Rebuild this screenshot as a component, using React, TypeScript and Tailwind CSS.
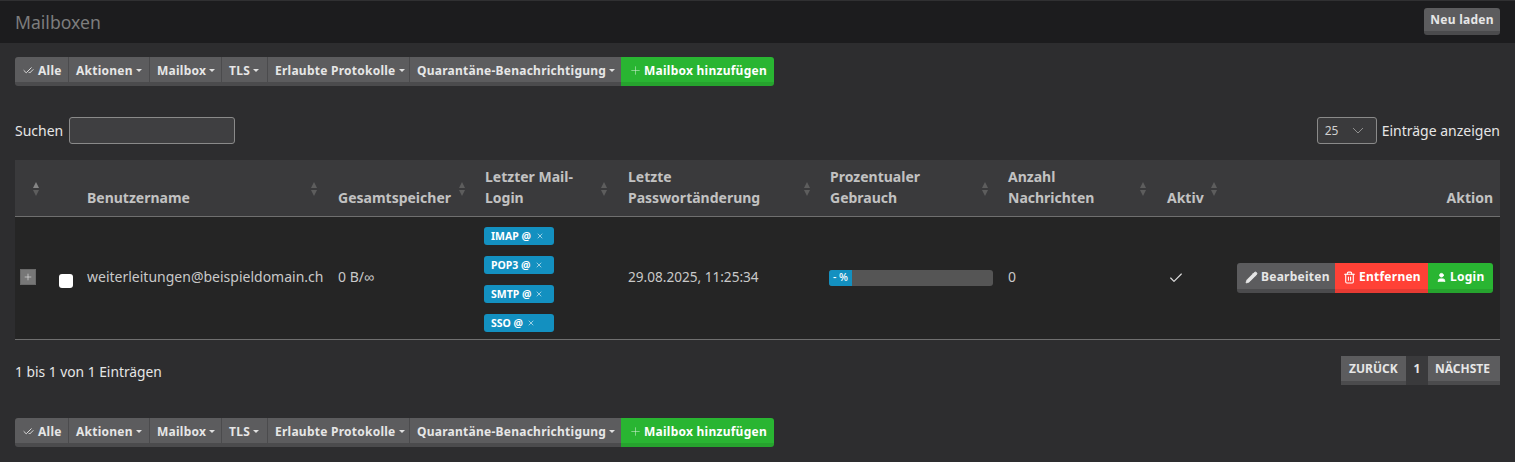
import { Check, CheckCheck, Pencil, Plus, Trash2, User, X } from "lucide-react";

const FONT = "font-['Noto_Sans',sans-serif]";

function Caret() {
  return <span className="mt-[8px] ml-[3px] block h-0 w-0 border-x-[3px] border-t-[3px] border-x-transparent border-t-[#e0e0e0]" />;
}

function ToolBtn({ label, width, caret = true, icon = false, first = false }: { label: string; width: string; caret?: boolean; icon?: boolean; first?: boolean }) {
  return (
    <button
      type="button"
      className={`flex h-[29px] items-start border-b-[4px] border-b-[#4b4b4d] bg-[#5c5c5e] pt-[4px] pl-[7px] text-[12px] leading-[20px] font-bold tracking-[0.25px] whitespace-nowrap text-[#e6e6e6] ${width} ${first ? "rounded-l-[3px]" : "border-l border-l-[#4b4b4d]"}`}
    >
      {icon ? <CheckCheck className="mt-[4px] mr-[4px] ml-[1px] size-[11px] text-[#e6e6e6]" strokeWidth={2} /> : null}
      {label}
      {caret ? <Caret /> : null}
    </button>
  );
}

function Toolbar() {
  return (
    <div className="flex w-fit">
      <ToolBtn label="Alle" width="w-[53px]" caret={false} icon first />
      <ToolBtn label="Aktionen" width="w-[81px]" />
      <ToolBtn label="Mailbox" width="w-[72px]" />
      <ToolBtn label="TLS" width="w-[46px]" />
      <ToolBtn label="Erlaubte Protokolle" width="w-[142px]" />
      <ToolBtn label="Quarantäne-Benachrichtigung" width="w-[212px]" />
      <button
        type="button"
        className="flex h-[29px] w-[153px] items-start rounded-r-[3px] border-b-[4px] border-b-[#26a32e] bg-[#29b532] pt-[4px] pl-[8px] text-[12px] leading-[20px] font-bold tracking-[0.25px] whitespace-nowrap text-white"
      >
        <Plus className="mt-[3px] mr-[2px] size-[13px] text-[#d5f0d7]" strokeWidth={1} />
        Mailbox hinzufügen
      </button>
    </div>
  );
}

function SortIcon({ className, active = false }: { className: string; active?: boolean }) {
  return (
    <span className={`absolute flex flex-col gap-[2px] ${className}`}>
      <span className={`h-0 w-0 border-x-[3.5px] border-b-[6px] border-x-transparent ${active ? "border-b-[#858585]" : "border-b-[#5d5d5d]"}`} />
      <span className="h-0 w-0 border-x-[3.5px] border-t-[6px] border-x-transparent border-t-[#5d5d5d]" />
    </span>
  );
}

function Badge({ label, xLeft }: { label: string; xLeft: number }) {
  return (
    <span className="-ml-px flex h-[18.5px] w-[70px] items-center rounded-[3px] bg-[#1390c0] pl-[7px] text-[10.5px] leading-none font-bold text-white">
      {label}
      <X className="size-[8px] text-[#dceef6]" style={{ marginLeft: xLeft }} strokeWidth={2} />
    </span>
  );
}

function Th({ children, sort, className = "" }: { children?: React.ReactNode; sort?: React.ReactNode; className?: string }) {
  return (
    <th className={`relative px-2 pb-[8px] align-bottom text-left text-[14px] leading-[21px] font-bold text-[#c2c2c2] ${className}`}>
      {children}
      {sort}
    </th>
  );
}

function ActionBtn({ className, icon, label }: { className: string; icon: React.ReactNode; label: string }) {
  return (
    <button type="button" className={`flex h-[30px] items-start border-b-[4px] pt-[4px] pl-[8px] text-[12px] leading-[20px] font-bold tracking-[0.25px] whitespace-nowrap ${className}`}>
      {icon}
      {label}
    </button>
  );
}

export default function App() {
  return (
    <div className={`${FONT} h-[462px] w-[1515px] overflow-hidden bg-[#2d2d2f] text-[14px] text-[#e6e6e6]`}>
      <div className="flex h-[43px] items-start justify-between border-t border-t-[#303032] bg-[#1c1c1e] px-[15px]">
        <h1 className="pt-[9px] text-[17.6px] leading-[24px] font-normal text-[#7d7d7d]">Mailboxen</h1>
        <button
          type="button"
          className="mt-[7px] h-[27px] w-[76px] rounded-[3px] border-b-[4px] border-b-[#4b4b4d] bg-[#5c5c5e] pt-[1px] text-[12px] leading-[20px] font-bold tracking-[0.25px] text-[#e6e6e6]"
        >
          Neu laden
        </button>
      </div>

      <div className="px-[15px] pt-[14px]">
        <Toolbar />

        <div className="mt-[31px] flex h-[27px] items-center justify-between">
          <label className="flex items-center">
            <span className="mr-[6px]">Suchen</span>
            <input className="h-[27px] w-[166px] rounded-[3px] border border-[#8a8a8a] bg-[#3f3f41]" />
          </label>
          <div className="flex items-center">
            <span className="flex h-[27px] w-[60px] items-center rounded-[3px] border border-[#8a8a8a] bg-[#3a3a3c] pl-[7px] text-[12px] text-[#d0d0d0]">
              25
              <svg className="ml-[14px]" width="12" height="7" viewBox="0 0 12 7" fill="none" stroke="#8f8f8f" strokeWidth="1">
                <path d="M1 1l5 5 5-5" />
              </svg>
            </span>
            <span className="ml-[5px]">Einträge anzeigen</span>
          </div>
        </div>

        <table className="mt-[16px] w-[1485px] table-fixed border-collapse">
          <colgroup>
            <col className="w-[35px]" />
            <col className="w-[29px]" />
            <col className="w-[251px]" />
            <col className="w-[147px]" />
            <col className="w-[143px]" />
            <col className="w-[202px]" />
            <col className="w-[178px]" />
            <col className="w-[159px]" />
            <col className="w-[70px]" />
            <col />
          </colgroup>
          <thead>
            <tr className="h-[56px] border-b border-b-[#6f6f6f] bg-[#3a3a3c]">
              <Th sort={<SortIcon className="top-[22px] left-[18px]" active />} />
              <Th />
              <Th sort={<SortIcon className="top-[22px] right-[13px]" />}>Benutzername</Th>
              <Th sort={<SortIcon className="top-[22px] right-[12px]" />}>Gesamtspeicher</Th>
              <Th sort={<SortIcon className="top-[22px] right-[13px]" />}>Letzter Mail-<br />Login</Th>
              <Th sort={<SortIcon className="top-[22px] right-[12px]" />}>Letzte<br />Passwortänderung</Th>
              <Th sort={<SortIcon className="top-[22px] right-[12px]" />}>Prozentualer<br />Gebrauch</Th>
              <Th sort={<SortIcon className="top-[22px] right-[13px]" />}>Anzahl<br />Nachrichten</Th>
              <Th sort={<SortIcon className="top-[22px] right-[12px]" />}>Aktiv</Th>
              <Th className="!pr-[7px] !text-right">Aktion</Th>
            </tr>
          </thead>
          <tbody>
            <tr className="h-[123px] border-b border-b-[#6f6f6f] bg-[#252525] text-[#c9c9c9]">
              <td className="pl-[5px]">
                <span className="mb-[2px] flex size-[16px] items-center justify-center border border-[#6a6a6a] bg-[#777777]">
                  <Plus className="size-[10px] text-[#e6e6e6]" strokeWidth={1.5} />
                </span>
              </td>
              <td className="pl-[9px]">
                <input type="checkbox" className="mt-[6px] block size-[14px] appearance-none rounded-[3px] bg-white" />
              </td>
              <td className="px-2 pb-[2px]">weiterleitungen@beispieldomain.ch</td>
              <td className="px-2 pb-[2px]">0 B/∞</td>
              <td className="px-2 pt-[4px]">
                <div className="flex flex-col gap-[10.5px]">
                  <Badge label="IMAP @" xLeft={5} />
                  <Badge label="POP3 @" xLeft={4} />
                  <Badge label="SMTP @" xLeft={4} />
                  <Badge label="SSO @" xLeft={4} />
                </div>
              </td>
              <td className="px-2 text-[13.6px]">29.08.2025, 11:25:34</td>
              <td className="px-[7px]">
                <div className="flex h-[16px] w-[164px] overflow-hidden rounded-[3px] bg-[#555555]">
                  <div className="flex w-[23px] items-center justify-center bg-[#1390c0] text-[10.5px] font-medium text-white">- %</div>
                </div>
              </td>
              <td className="px-2 pb-[2px]">0</td>
              <td className="px-2">
                <Check className="ml-[1px] size-[16px] text-[#dcdcdc]" strokeWidth={1.75} />
              </td>
              <td className="pr-[7px]">
                <div className="flex justify-end">
                  <ActionBtn
                    className="w-[98px] rounded-l-[3px] border-b-[#4b4b4d] bg-[#5c5c5e] text-[#e6e6e6]"
                    icon={<Pencil className="mt-[4px] mr-[3px] size-[13px] fill-[#e6e6e6]" strokeWidth={1.5} />}
                    label="Bearbeiten"
                  />
                  <ActionBtn
                    className="w-[93px] border-b-[#e63b33] bg-[#ff4136] text-white"
                    icon={<Trash2 className="mt-[4px] mr-[3px] size-[13px]" strokeWidth={2} />}
                    label="Entfernen"
                  />
                  <ActionBtn
                    className="w-[65px] rounded-r-[3px] border-b-[#26a32e] bg-[#29b532] text-white"
                    icon={<User className="mt-[5px] mr-[3px] size-[11px] fill-white" strokeWidth={2} />}
                    label="Login"
                  />
                </div>
              </td>
            </tr>
          </tbody>
        </table>

        <div className="mt-[16px] flex items-start justify-between">
          <span className="pt-[6px] text-[13.8px]">1 bis 1 von 1 Einträgen</span>
          <div className="flex text-[12px] leading-[20px] font-bold">
            <span className="h-[29px] w-[65px] border-b-[4px] border-b-[#4b4b4d] bg-[#5c5c5e] pt-[3px] pl-[8px]">ZURÜCK</span>
            <span className="h-[29px] w-[22px] bg-[#3a3a3c] pt-[3px] text-center">1</span>
            <span className="h-[29px] w-[72px] border-b-[4px] border-b-[#4b4b4d] bg-[#5c5c5e] pt-[3px] pl-[7px]">NÄCHSTE</span>
          </div>
        </div>

        <div className="mt-[33px]">
          <Toolbar />
        </div>
      </div>
    </div>
  );
}
